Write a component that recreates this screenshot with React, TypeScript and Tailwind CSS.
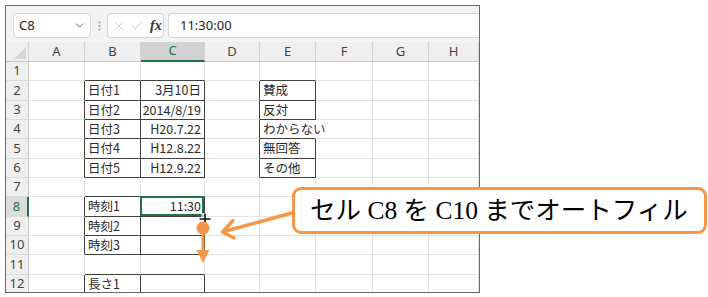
import React from "react";
import { ChevronDown, X, Check } from "lucide-react";

type Edge = { top?: boolean; right?: boolean; bottom?: boolean; left?: boolean; hideRight?: boolean };

const letters = ["A", "B", "C", "D", "E", "F", "G", "H"];
const rowHeights = [
  "h-[19px]", "h-[20px]", "h-[19px]", "h-[19px]", "h-[20px]", "h-[19px]",
  "h-[19px]", "h-[20px]", "h-[19px]", "h-[19px]", "h-[20px]", "h-[19px]",
];

const values: Record<string, string> = {
  B2: "日付1", C2: "3月10日",
  B3: "日付2", C3: "2014/8/19",
  B4: "日付3", C4: "H20.7.22",
  B5: "日付4", C5: "H12.8.22",
  B6: "日付5", C6: "H12.9.22",
  E2: "賛成", E3: "反対", E4: "わからない", E5: "無回答", E6: "その他",
  B8: "時刻1", C8: "11:30",
  B9: "時刻2", B10: "時刻3",
  B12: "長さ1",
};

const full: Edge = { top: true, right: true, bottom: true, left: true };
const edges: Record<string, Edge> = {};
[2, 3, 4, 5, 6, 8, 9, 10, 12].forEach((r) => {
  edges["B" + r] = full;
  edges["C" + r] = full;
});
[2, 3, 5, 6].forEach((r) => (edges["E" + r] = full));
edges["E4"] = { top: true, bottom: true, left: true, hideRight: true };

const at = (c: number, r: number) => edges[(letters[c] ?? "") + r];

function Cell({ c, r }: { c: number; r: number }) {
  const key = letters[c] + r;
  const me = at(c, r);
  const darkRight = !!(me?.right || at(c + 1, r)?.left);
  const darkBottom = !!(me?.bottom || at(c, r + 1)?.top);
  const right = me?.hideRight
    ? "border-r-white"
    : darkRight
    ? "border-r-[#3f3f3f]"
    : "border-r-[#e2e2e2]";
  const bottom = darkBottom ? "border-b-[#3f3f3f]" : "border-b-[#e2e2e2]";
  const text = values[key];
  const alignRight = letters[c] === "C";
  return (
    <div
      className={`relative border-r border-b ${right} ${bottom} flex items-center px-[3px] ${
        alignRight ? "justify-end" : "justify-start"
      }`}
    >
      {text && (
        <span className="relative z-10 whitespace-nowrap text-[12.5px] leading-none text-[#2a2a2a] font-['Noto_Sans_CJK_JP',sans-serif]">
          {text}
        </span>
      )}
      {key === "C8" && (
        <div className="absolute -left-px -top-px right-0 bottom-0 border-2 border-[#217346]" />
      )}
    </div>
  );
}

function Toolbar() {
  return (
    <div className="h-[36px] bg-[#f3f3f3] flex items-start pt-[7px] pl-[7px]">
      <div className="w-[78px] h-[25px] bg-white border border-[#d6d6d6] rounded-[4px] flex items-center justify-between pl-[5px] pr-[4px]">
        <span className="text-[13px] text-[#222] font-['Noto_Sans',sans-serif]">C8</span>
        <ChevronDown size={13} strokeWidth={1.6} className="text-[#555]" />
      </div>
      <div className="w-[16px] h-[25px] flex items-center justify-center">
        <svg width="3" height="10" viewBox="0 0 3 10">
          <circle cx="1.5" cy="1.5" r="1" fill="#9a9a9a" />
          <circle cx="1.5" cy="5" r="1" fill="#9a9a9a" />
          <circle cx="1.5" cy="8.5" r="1" fill="#9a9a9a" />
        </svg>
      </div>
      <div className="w-[57px] h-[25px] bg-white border border-[#d6d6d6] rounded-[4px] flex items-center pl-[4px] gap-[4px]">
        <X size={14} strokeWidth={1} className="text-[#b4b4b4]" />
        <Check size={14} strokeWidth={1} className="text-[#b4b4b4]" />
        <span className="text-[14px] italic font-bold text-[#333] font-['Liberation_Serif',serif] leading-none ml-[2px]">
          fx
        </span>
      </div>
      <div className="ml-[4px] flex-1 h-[25px] bg-white border border-r-0 border-[#d6d6d6] rounded-l-[4px] flex items-center pl-[11px]">
        <span className="text-[13px] text-[#222] font-['Noto_Sans',sans-serif]">11:30:00</span>
      </div>
    </div>
  );
}

function Sheet() {
  return (
    <div className="grid grid-cols-[23px_56px_56px_64px_55px_56px_57px_56px_50px]">
      <div className="h-[20px] bg-[#efefef] border-r border-b border-r-[#d4d4d4] border-b-[#c8c8c8] relative">
        <svg className="absolute right-[2px] bottom-[2px]" width="12" height="12" viewBox="0 0 12 12">
          <polygon points="12,0 12,12 0,12" fill="#d6d6d6" />
        </svg>
      </div>
      {letters.map((l) => (
        <div
          key={l}
          className={`h-[20px] flex items-center justify-center text-[13px] font-['Noto_Sans',sans-serif] border-r border-r-[#d4d4d4] ${
            l === "C"
              ? "bg-[#d2d2d2] text-[#217346] border-b-2 border-b-[#217346]"
              : "bg-[#efefef] text-[#444] border-b border-b-[#c8c8c8]"
          }`}
        >
          {l}
        </div>
      ))}
      {rowHeights.map((h, i) => {
        const r = i + 1;
        return (
          <React.Fragment key={r}>
            <div
              className={`${h} flex items-center justify-center text-[13px] font-['Noto_Sans',sans-serif] border-b border-b-[#dadada] ${
                r === 8
                  ? "bg-[#dcdcdc] text-[#217346] border-r-2 border-r-[#217346]"
                  : "bg-[#efefef] text-[#444] border-r border-r-[#c8c8c8]"
              }`}
            >
              {r}
            </div>
            {letters.map((_, c) => (
              <Cell key={c} c={c} r={r} />
            ))}
          </React.Fragment>
        );
      })}
    </div>
  );
}

export default function App() {
  return (
    <div className="relative w-[708px] h-[297px] bg-white overflow-hidden">
      <div className="ml-[5px] mt-[5px] w-[475px] h-[288px] border border-[#6b6b6b] overflow-hidden">
        <Toolbar />
        <Sheet />
      </div>

      <svg className="absolute inset-0 pointer-events-none" width="708" height="297" viewBox="0 0 708 297">
        <rect x="202" y="214" width="5" height="5" fill="#217346" stroke="white" strokeWidth="1" />
        <path d="M205 213v12M199 219h12" stroke="white" strokeWidth="3.5" />
        <path d="M205 213.5v11M199.5 219h11" stroke="#111" strokeWidth="1.6" />
        <circle cx="203" cy="228" r="6.5" fill="#f79646" />
        <line x1="203" y1="228" x2="203" y2="252" stroke="#f79646" strokeWidth="3" />
        <polygon points="196.5,250 209.5,250 203,263" fill="#f79646" />
        <line x1="292" y1="213" x2="224" y2="231.5" stroke="#f79646" strokeWidth="3.5" strokeLinecap="round" />
        <polyline
          points="233,220.5 222.5,232 234,238"
          fill="none"
          stroke="#f79646"
          strokeWidth="3.5"
          strokeLinecap="round"
          strokeLinejoin="round"
        />
      </svg>

      <div className="absolute left-[292px] top-[187px] w-[415px] h-[47px] rounded-[9px] border-[3px] border-[#f79646] bg-white flex items-center pl-[15px]">
        <span className="text-[25.5px] leading-none text-black whitespace-nowrap font-['Liberation_Serif','Noto_Sans_CJK_JP',serif]">
          セル C8 を C10 までオートフィル
        </span>
      </div>
    </div>
  );
}
